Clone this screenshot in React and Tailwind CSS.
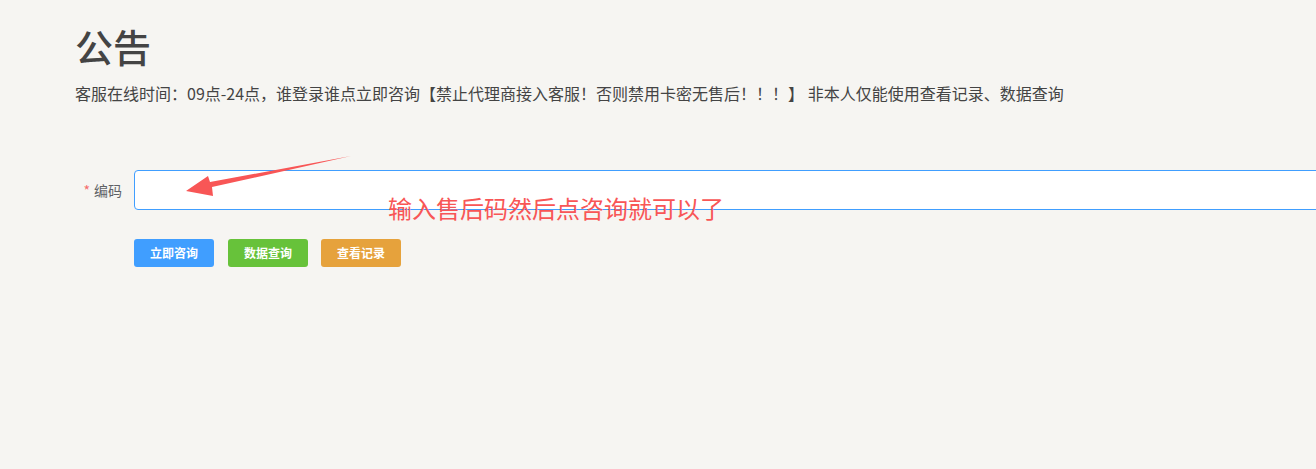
import React from "react";

export default function App() {
  return (
    <div
      className="relative min-h-screen overflow-hidden bg-[#f6f5f2]"
      style={{ fontFamily: '"Noto Sans CJK SC", "Noto Sans", sans-serif' }}
    >
      <div className="pl-[75px] pt-[19px]">
        <h1 className="text-[38px] leading-[54px] font-medium text-[#444]">公告</h1>
        <p className="mt-[8px] text-[16px] leading-[24px] text-[#444]">
          客服在线时间：09点-24点，谁登录谁点立即咨询【禁止代理商接入客服！否则禁用卡密无售后！！！】 非本人仅能使用查看记录、数据查询
        </p>
      </div>

      <div className="mt-[65px] flex items-center">
        <label className="w-[134px] shrink-0 pr-[12px] text-right text-[14px] text-[#606266]">
          <span className="mr-[4px] text-[#f56c6c]">*</span>编码
        </label>
        <input
          className="h-[40px] w-[1260px] shrink-0 rounded-[4px] border border-[#409eff] bg-white px-[15px] text-[14px] outline-none"
        />
      </div>

      <div className="mt-[29px] flex pl-[134px]">
        <button className="h-[28px] w-[80px] rounded-[3px] bg-[#409eff] text-[12px] font-bold text-white">立即咨询</button>
        <button className="ml-[14px] h-[28px] w-[80px] rounded-[3px] bg-[#67c23a] text-[12px] font-bold text-white">数据查询</button>
        <button className="ml-[13px] h-[28px] w-[80px] rounded-[3px] bg-[#e6a23c] text-[12px] font-bold text-white">查看记录</button>
      </div>

      <svg className="pointer-events-none absolute left-0 top-0" width="400" height="220">
        <polygon points="186,191 208,176 210,182 351,156 212,187 213,196" fill="#f85656" />
      </svg>
      <div className="pointer-events-none absolute left-[388px] top-[191px] text-[24px] leading-[34px] text-[#f85656]">
        输入售后码然后点咨询就可以了
      </div>
    </div>
  );
}
